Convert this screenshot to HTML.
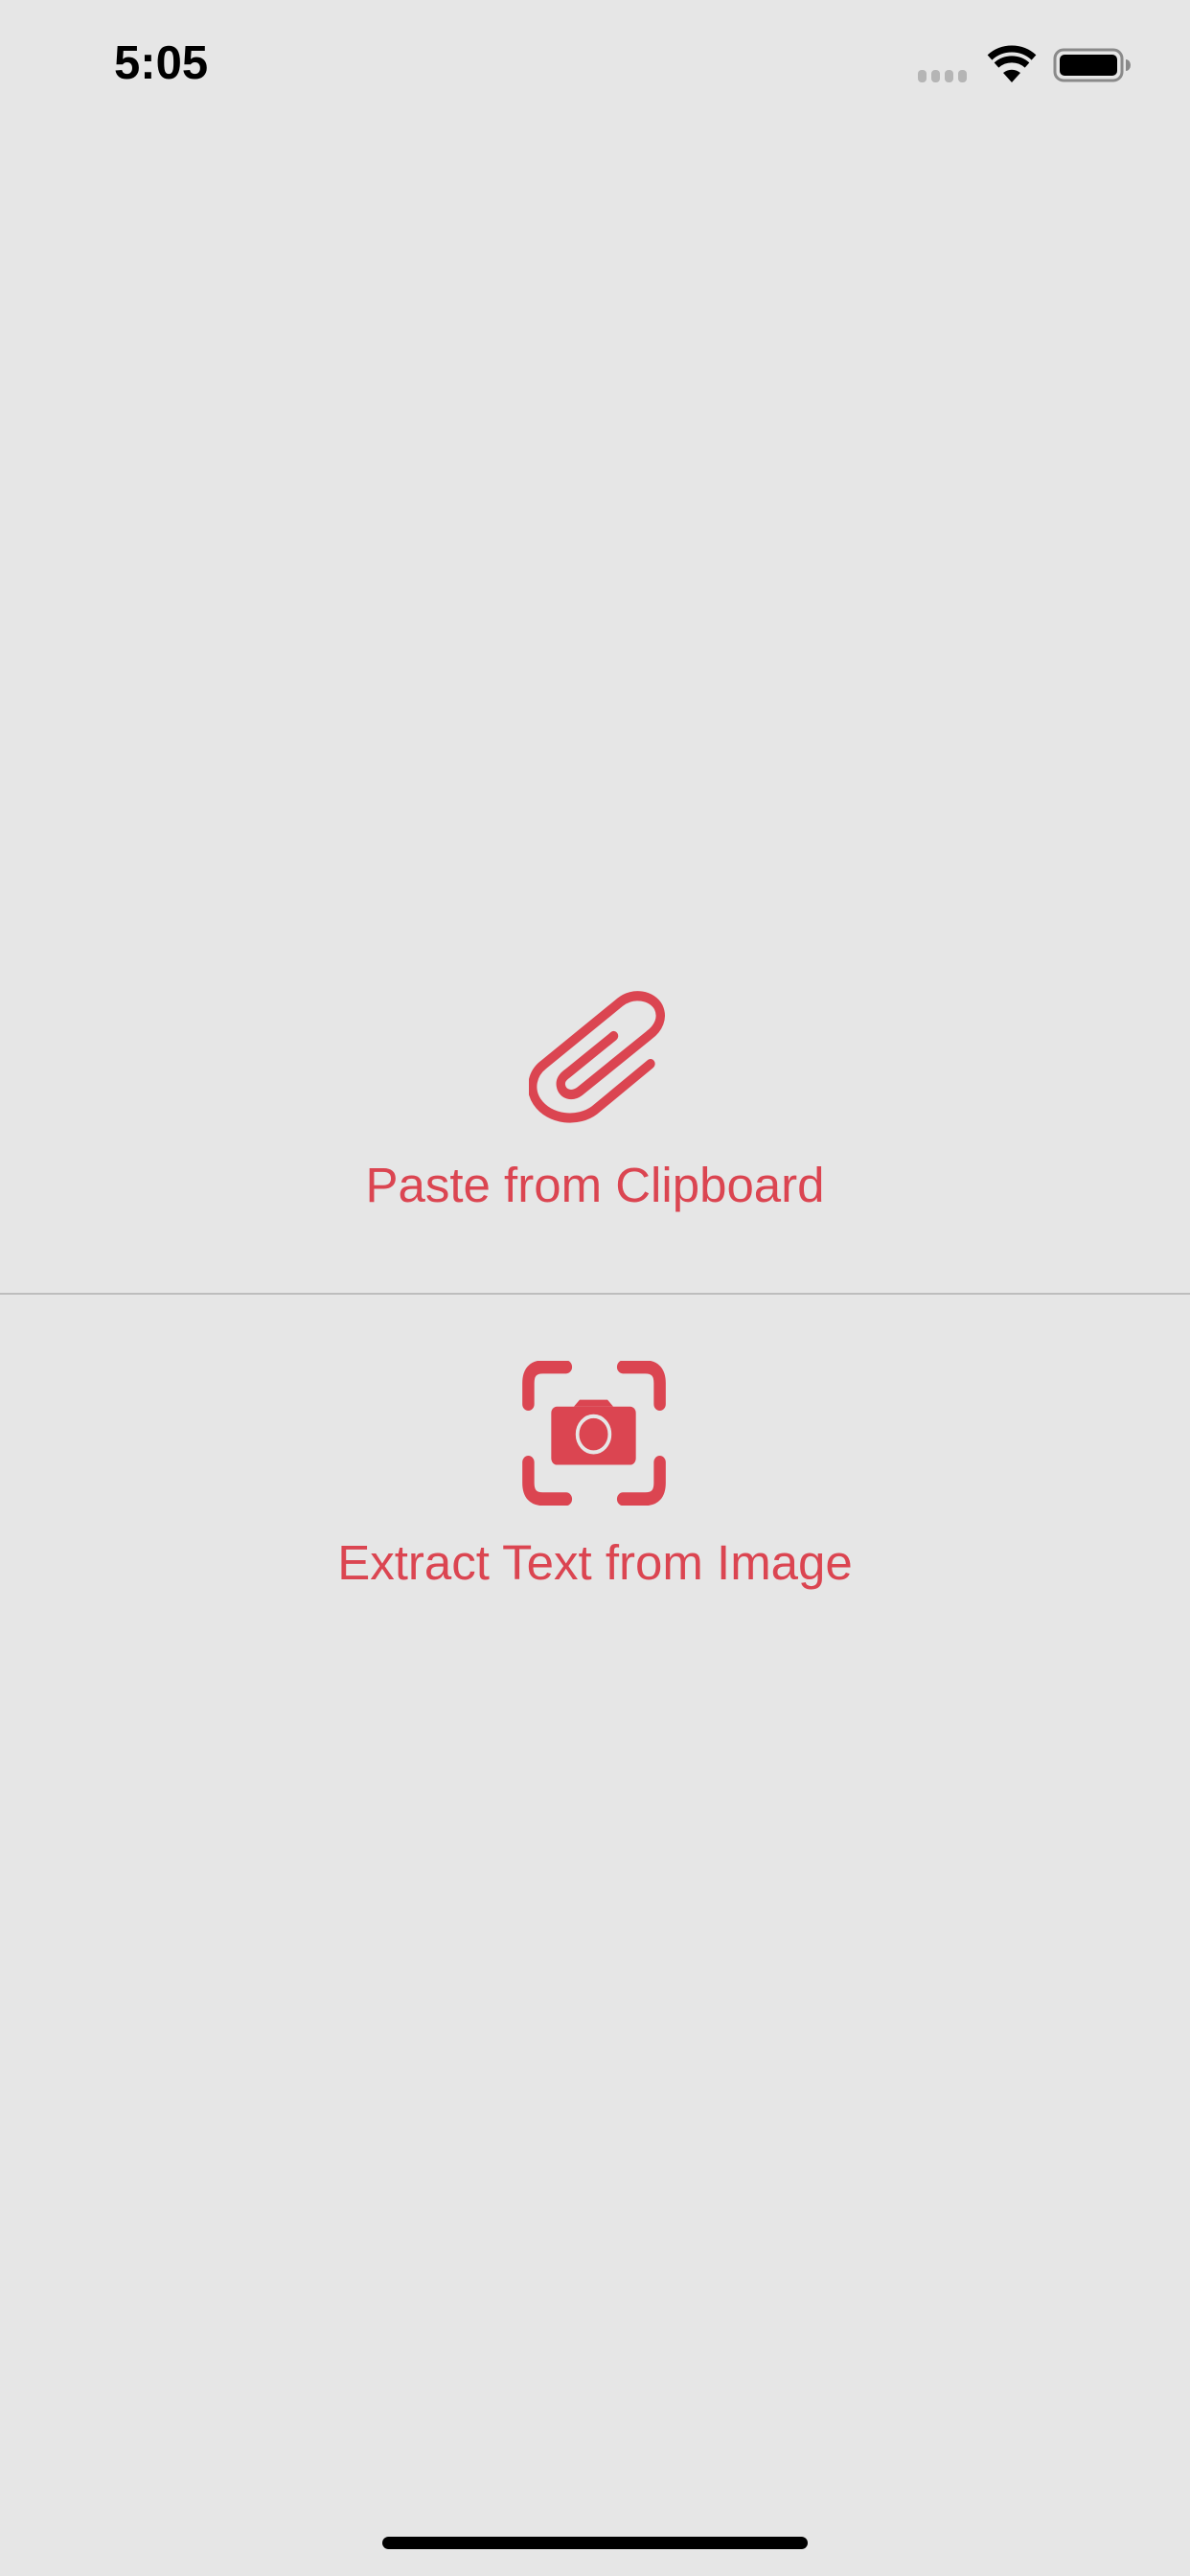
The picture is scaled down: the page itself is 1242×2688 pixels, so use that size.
<!DOCTYPE html>
<html><head><meta charset="utf-8"><style>
html,body{margin:0;padding:0}
body{width:1242px;height:2688px;background:#e6e6e6;position:relative;overflow:hidden;font-family:"Liberation Sans",sans-serif}
.t{position:absolute;left:0;width:1242px;text-align:center;color:#db4551;font-size:51px;line-height:1}
</style></head><body>
<div style="position:absolute;left:119px;top:42px;font-size:49px;font-weight:bold;color:#000;line-height:1">5:05</div>
<svg style="position:absolute;left:955px;top:44px" width="230" height="46" viewBox="955 44 230 46">
<g fill="#b5b5b5"><rect x="958" y="73" width="9" height="13" rx="4"/><rect x="972" y="73" width="9" height="13" rx="4"/><rect x="986" y="73" width="9" height="13" rx="4"/><rect x="1000" y="73" width="9" height="13" rx="4"/></g>
<path d="M1056 86 L1047 76 A14 14 0 0 1 1065 76 Z" fill="#000"/>
<path d="M1040 68 A24 24 0 0 1 1072 68" stroke="#000" stroke-width="7" fill="none"/>
<path d="M1033 60 A34 34 0 0 1 1079 60" stroke="#000" stroke-width="7" fill="none"/>
<rect x="1101" y="52" width="70" height="32" rx="9" fill="none" stroke="#8a8a8a" stroke-width="3"/>
<rect x="1106" y="57" width="60" height="22" rx="5" fill="#000"/>
<path d="M1175 62 A5 6 0 0 1 1175 74 Z" fill="#8a8a8a"/>
</svg>
<svg style="position:absolute;left:552px;top:1033px" width="142" height="140" viewBox="95 60 425 385" preserveAspectRatio="none">
<path d="M475 272 L300 405 C250 440 160 435 120 380 C95 345 105 300 140 275 L380 95 C420 65 480 75 500 110 C515 140 500 170 470 190 L255 350 C230 368 200 360 195 335 C192 320 200 310 215 300 L360 192" fill="none" stroke="#db4551" stroke-width="28" stroke-linecap="round" stroke-linejoin="round"/>
</svg>
<div class="t" style="top:1211px">Paste from Clipboard</div>
<div style="position:absolute;left:0;top:1349px;width:1242px;height:2px;background:#bdbdbd"></div>
<svg style="position:absolute;left:545px;top:1420px" width="150" height="151" viewBox="80 1118 445 402" preserveAspectRatio="none">
<g fill="none" stroke="#db4551" stroke-width="37" stroke-linecap="round">
<path d="M99 1238 V1180 Q99 1135 144 1135 H216"/>
<path d="M392 1135 H461 Q506 1135 506 1180 V1238"/>
<path d="M99 1400 V1457 Q99 1502 144 1502 H216"/>
<path d="M392 1502 H461 Q506 1502 506 1457 V1400"/>
</g>
<path d="M240 1245 L258 1226 H344 L362 1245 Z" fill="#db4551"/>
<rect x="170" y="1245" width="262" height="162" rx="18" fill="#db4551"/>
<circle cx="301" cy="1322" r="50" fill="none" stroke="#e6e6e6" stroke-width="11"/>
</svg>
<div class="t" style="top:1605px">Extract Text from Image</div>
<div style="position:absolute;left:399px;top:2647px;width:444px;height:13px;border-radius:7px;background:#000"></div>
</body></html>
